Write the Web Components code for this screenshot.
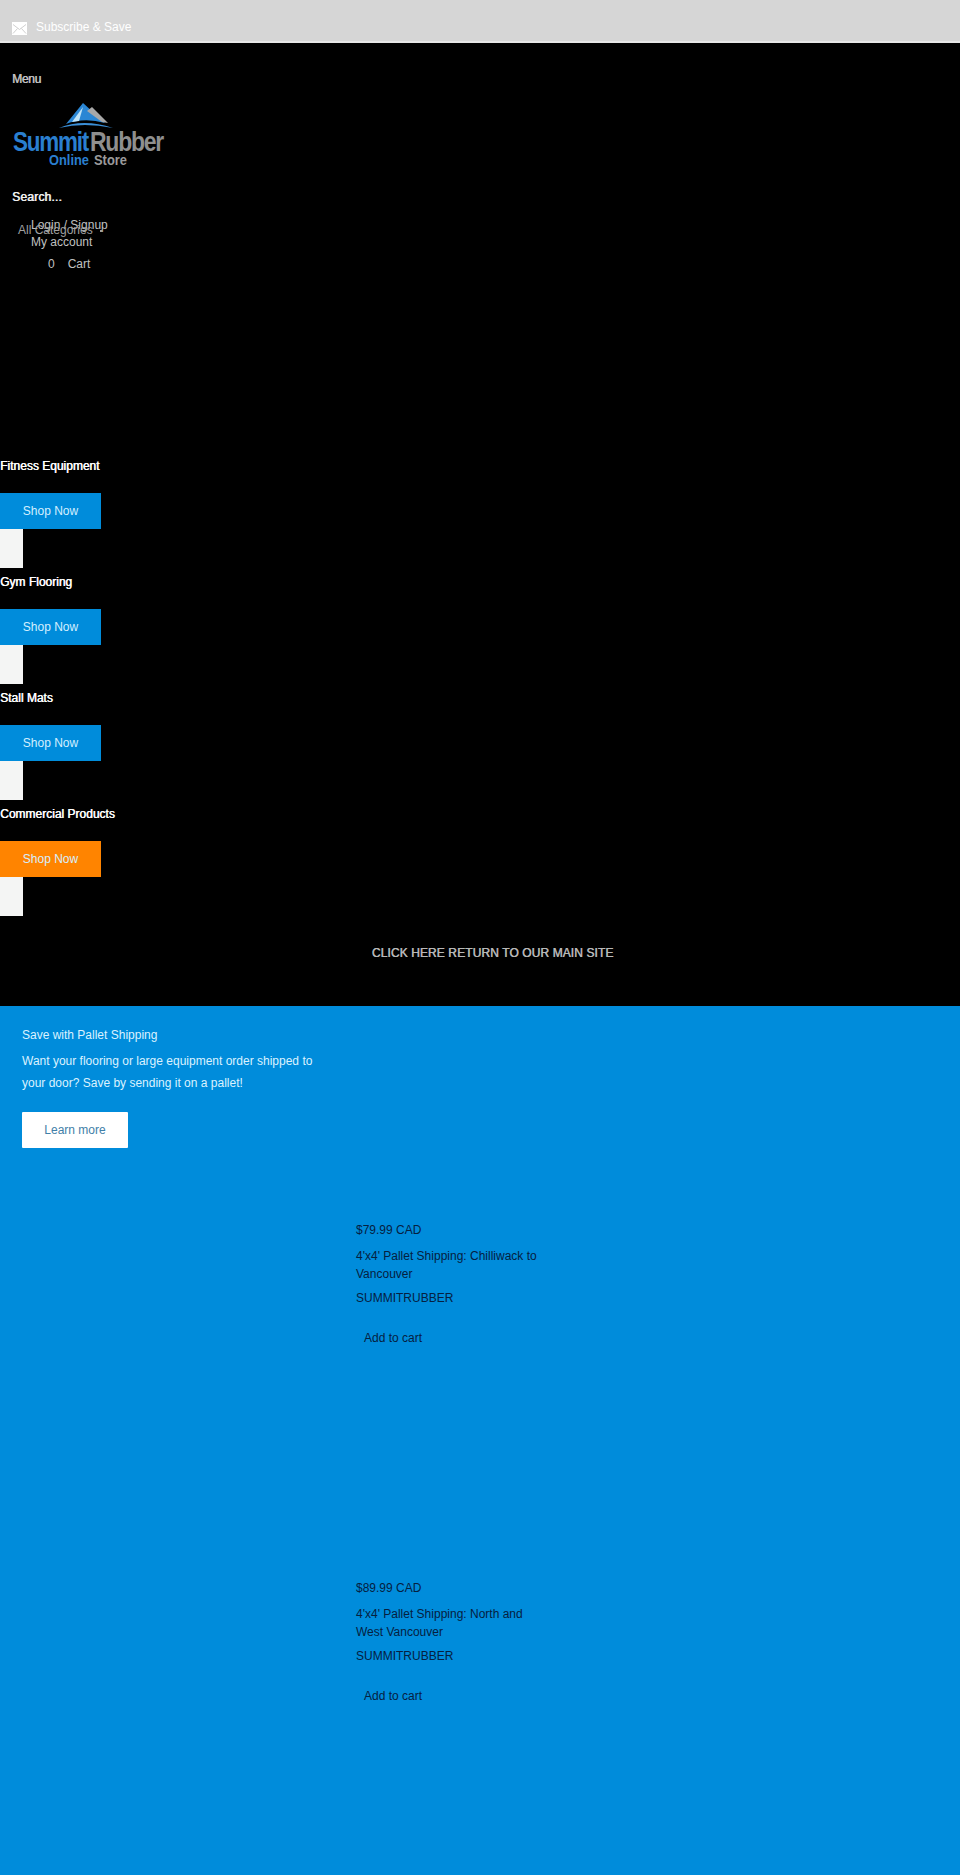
<!DOCTYPE html>
<html lang="en">
<head>
<meta charset="utf-8">
<title>Summit Rubber Online Store</title>
<style>
    html, body { margin: 0; padding: 0; background: #008cdb; }
    body { font-family: "Liberation Sans", Arial, sans-serif; font-size: 12px; width: 960px; }
</style>
</head>
<body>
<top-bar></top-bar>
<site-header></site-header>
<section-list>
    <category-row title="Fitness Equipment"></category-row>
    <category-row title="Gym Flooring"></category-row>
    <category-row title="Stall Mats"></category-row>
    <category-row title="Commercial Products" color="#ff8400"></category-row>
    <return-link></return-link>
</section-list>
<pallet-section>
    <product-card price="$79.99 CAD" name="4'x4' Pallet Shipping: Chilliwack to Vancouver"></product-card>
    <product-card price="$89.99 CAD" name="4'x4' Pallet Shipping: North and West Vancouver"></product-card>
</pallet-section>

<script>
class TopBar extends HTMLElement {
    constructor() {
        super();
        this.attachShadow({ mode: 'open' });
        this.shadowRoot.innerHTML = `
            <style>
                :host {
                    display: flex;
                    align-items: flex-end;
                    box-sizing: border-box;
                    height: 43px;
                    padding: 0 0 7px 12px;
                    background: #d6d6d6;
                    border-bottom: 2px solid #e6e6e6;
                    color: #fff;
                }
                svg { display: block; margin: 0 9px -1px 0; }
            </style>
            <svg width="15" height="13" viewBox="0 0 15 13">
                <rect width="15" height="13" fill="#fff"/>
                <path d="M1 2.5l6.5 5 6.5-5M1 11.5l4.5-5M14 11.5l-4.5-5" fill="none" stroke="#d0d0d0"/>
            </svg>
            <span>Subscribe &amp; Save</span>
        `;
    }
}

class SiteHeader extends HTMLElement {
    constructor() {
        super();
        this.attachShadow({ mode: 'open' });
        this.shadowRoot.innerHTML = `
            <style>
                :host {
                    display: block;
                    box-sizing: border-box;
                    height: 400px;
                    padding: 29px 12px 0;
                    background: #000;
                    color: #c0c0c0;
                }
                .menu { line-height: 14px; letter-spacing: -.3px; text-shadow: .5px 0 0 #c0c0c0; }
                svg { display: block; margin: 17px 0 22px; }
                .search { color: #f0f0f0; line-height: 16px; letter-spacing: .2px; text-shadow: .6px 0 0 #f0f0f0; }
                .links { position: relative; margin: 12px 0 0 19px; width: 100px; line-height: 17px; }
                .cats { position: absolute; left: -13px; top: 5px; color: #a0a0a0; white-space: nowrap; }
                .cats::after { content: ""; position: absolute; left: 82px; top: 8px; width: 2px; height: 2px; background: #a0a0a0; }
                .cart { display: flex; gap: 13px; margin: 6px 0 0 36px; line-height: 14px; }
            </style>
            <div class="menu">Menu</div>
            <svg width="190" height="64" viewBox="0 0 190 64">
                <path d="M47 25Q71 15 101 25Q72 19 47 25Z" fill="#3a8fd8"/>
                <path d="M54 21L71 0L93 20Q72 14 54 21Z" fill="#2a86d4"/>
                <path d="M60 19L71 4L67 18Z" fill="#bfe3f7"/>
                <path d="M75 8L80 4L96 20L90 19Z" fill="#a8a8a8"/>
                <text x="1" y="48" font-family="Liberation Sans" font-size="28" font-weight="700" letter-spacing="-1.5" textLength="75" lengthAdjust="spacingAndGlyphs" fill="#2a7fd0">Summit</text>
                <text x="78" y="48" font-family="Liberation Sans" font-size="28" font-weight="700" letter-spacing="-1.5" textLength="73" lengthAdjust="spacingAndGlyphs" fill="#8f8f8f">Rubber</text>
                <text x="37" y="62" font-family="Liberation Sans" font-size="14" font-weight="700" textLength="40" lengthAdjust="spacingAndGlyphs" fill="#2a7fd0">Online</text>
                <text x="82" y="62" font-family="Liberation Sans" font-size="14" font-weight="700" textLength="33" lengthAdjust="spacingAndGlyphs" fill="#9a9a9a">Store</text>
            </svg>
            <div class="search">Search...</div>
            <div class="links">
                <div>Login / Signup</div>
                <div>My account</div>
                <div class="cats">All Categories</div>
            </div>
            <div class="cart"><span>0</span><span>Cart</span></div>
        `;
    }
}

class SectionList extends HTMLElement {
    constructor() {
        super();
        this.attachShadow({ mode: 'open' });
        this.shadowRoot.innerHTML = `
            <style>
                :host { display: block; height: 563px; background: #000; }
            </style>
            <slot></slot>
        `;
    }
}

class CategoryRow extends HTMLElement {
    constructor() {
        super();
        this.attachShadow({ mode: 'open' });
        const color = this.getAttribute('color') || '#008cdb';
        this.shadowRoot.innerHTML = `
            <style>
                :host { display: block; height: 116px; color: #fff; }
                h3 { margin: 0; height: 50px; padding-top: 15px; box-sizing: border-box; font-size: 12px; font-weight: 400; line-height: 16px; text-shadow: .5px 0 0 #fff; }
                a { display: flex; align-items: center; justify-content: center; width: 101px; height: 36px; background: ${color}; color: #d4efff; }
                i { display: block; width: 23px; height: 39px; background: #f4f5f4; }
            </style>
            <h3>${this.getAttribute('title')}</h3>
            <a>Shop Now</a>
            <i></i>
        `;
    }
}

class ReturnLink extends HTMLElement {
    constructor() {
        super();
        this.attachShadow({ mode: 'open' });
        this.shadowRoot.innerHTML = `
            <style>
                :host { display: block; padding: 38px 0 0 25px; text-align: center; color: #b8b8b8; letter-spacing: .1px; line-height: 16px; text-shadow: .5px 0 0 #b8b8b8; }
            </style>
            CLICK HERE RETURN TO OUR MAIN SITE
        `;
    }
}

class PalletSection extends HTMLElement {
    constructor() {
        super();
        this.attachShadow({ mode: 'open' });
        this.shadowRoot.innerHTML = `
            <style>
                :host { display: block; padding: 21px 22px 0; background: #008cdb; color: #dcf2ff; }
                h2 { margin: 0; font-size: 12px; font-weight: 400; line-height: 16px; }
                p { width: 300px; margin: 7px 0 0; line-height: 22px; }
                a { display: flex; align-items: center; justify-content: center; width: 106px; height: 36px; margin-top: 18px; background: #fff; border-radius: 1px; color: #3f80a8; }
                .products { margin-top: 74px; }
            </style>
            <h2>Save with Pallet Shipping</h2>
            <p>Want your flooring or large equipment order shipped to your door? Save by sending it on a pallet!</p>
            <a>Learn more</a>
            <div class="products"><slot></slot></div>
        `;
    }
}

class ProductCard extends HTMLElement {
    constructor() {
        super();
        this.attachShadow({ mode: 'open' });
        this.shadowRoot.innerHTML = `
            <style>
                :host { display: block; box-sizing: border-box; height: 358px; padding-left: 334px; color: #06203f; }
                .price { line-height: 16px; }
                .name { width: 190px; margin-top: 9px; line-height: 18px; }
                .vendor { margin-top: 7px; line-height: 16px; }
                .add { margin: 24px 0 0 8px; line-height: 16px; }
            </style>
            <div class="price">${this.getAttribute('price')}</div>
            <div class="name">${this.getAttribute('name')}</div>
            <div class="vendor">SUMMITRUBBER</div>
            <div class="add">Add to cart</div>
        `;
    }
}

customElements.define('top-bar', TopBar);
customElements.define('site-header', SiteHeader);
customElements.define('section-list', SectionList);
customElements.define('category-row', CategoryRow);
customElements.define('return-link', ReturnLink);
customElements.define('pallet-section', PalletSection);
customElements.define('product-card', ProductCard);
</script>
</body>
</html>
